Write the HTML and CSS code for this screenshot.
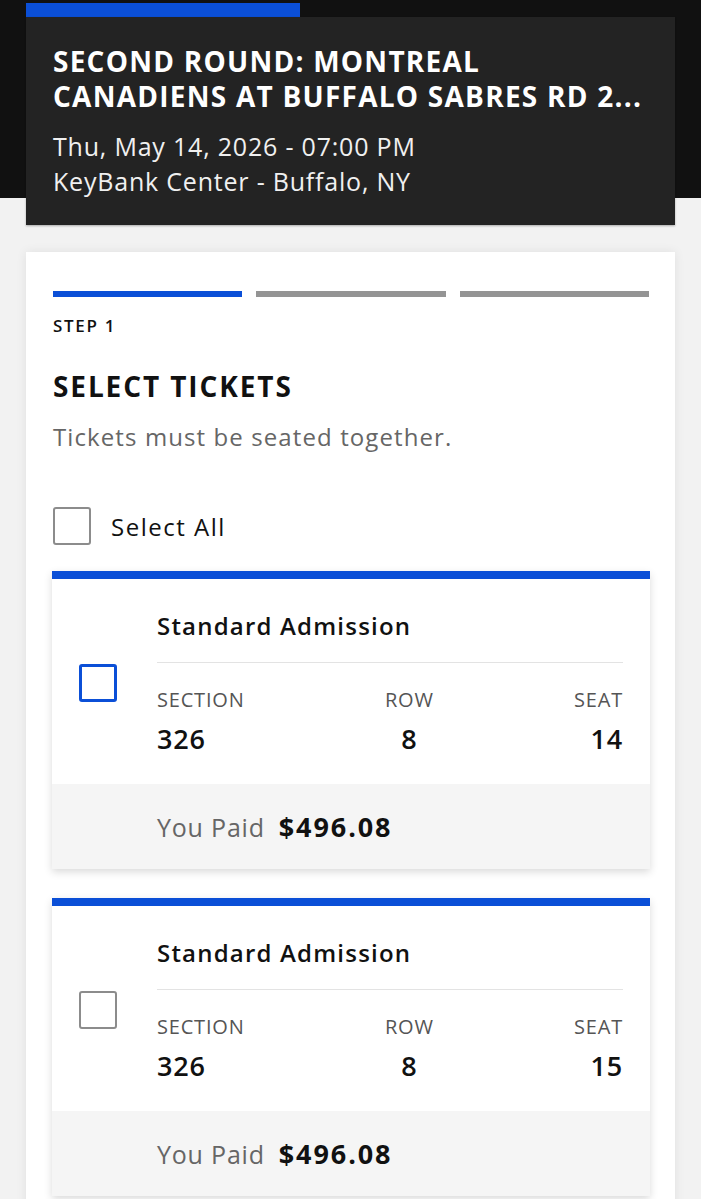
FILE: index.html
```html
<!DOCTYPE html>
<html lang="en">
<head>
  <meta charset="UTF-8">
  <meta name="viewport" content="width=device-width, initial-scale=1.0">
  <title>Select Tickets</title>
  <link rel="stylesheet" href="styles.css">
</head>
<body>
  <div class="page">
    <div class="event-tab"></div>
    <div class="event">
      <h1>Second Round: Montreal<br>Canadiens at Buffalo Sabres RD 2...</h1>
      <p>Thu, May 14, 2026 - 07:00 PM</p>
      <p>KeyBank Center - Buffalo, NY</p>
    </div>

    <div class="panel">
      <div class="steps">
        <span class="active"></span>
        <span></span>
        <span></span>
      </div>
      <div class="step-label">Step 1</div>
      <h2>Select Tickets</h2>
      <p class="hint">Tickets must be seated together.</p>

      <label class="select-all">
        <span class="box"></span>
        <span>Select All</span>
      </label>

      <div class="ticket">
        <div class="ticket-main">
          <div class="check"><span class="box focus"></span></div>
          <div class="ticket-info">
            <div class="ticket-type">Standard Admission</div>
            <div class="seat-grid">
              <div class="col"><span class="lbl">Section</span><span class="val">326</span></div>
              <div class="col mid"><span class="lbl">Row</span><span class="val">8</span></div>
              <div class="col end"><span class="lbl">Seat</span><span class="val">14</span></div>
            </div>
          </div>
        </div>
        <div class="ticket-foot">
          <span class="paid">You Paid</span>
          <span class="price">$496.08</span>
        </div>
      </div>

      <div class="ticket">
        <div class="ticket-main">
          <div class="check"><span class="box"></span></div>
          <div class="ticket-info">
            <div class="ticket-type">Standard Admission</div>
            <div class="seat-grid">
              <div class="col"><span class="lbl">Section</span><span class="val">326</span></div>
              <div class="col mid"><span class="lbl">Row</span><span class="val">8</span></div>
              <div class="col end"><span class="lbl">Seat</span><span class="val">15</span></div>
            </div>
          </div>
        </div>
        <div class="ticket-foot">
          <span class="paid">You Paid</span>
          <span class="price">$496.08</span>
        </div>
      </div>
    </div>
  </div>
</body>
</html>
```

FILE: styles.css
```css
body {
  margin: 0;
  padding: 0;
  font-family: 'Open Sans', 'Noto Sans', sans-serif;
  background-color: #f2f2f2;
  overflow: hidden;
}

.page {
  padding: 3px 26px 0;
  background: linear-gradient(#111111 198px, #f2f2f2 198px);
}

.event-tab {
  width: 274px;
  height: 14px;
  background-color: #0b4fd7;
}

.event {
  background-color: #232323;
  color: #ffffff;
  padding: 27px 27px 26px;
  box-shadow: 0 1px 2px rgba(0, 0, 0, 0.3);
}

.event h1 {
  margin: 0 0 15px;
  font-size: 28px;
  line-height: 35px;
  font-weight: 700;
  letter-spacing: 1.25px;
  text-transform: uppercase;
  white-space: nowrap;
}

.event p {
  margin: 0;
  font-size: 25px;
  line-height: 35px;
  font-weight: 400;
  letter-spacing: 0.8px;
  color: #f0f0f0;
}

.panel {
  margin-top: 27px;
  background: #ffffff;
  padding: 39px 26px 40px 27px;
  box-shadow: 0 0 10px rgba(0, 0, 0, 0.08);
}

.steps {
  display: flex;
  gap: 14px;
}

.steps span {
  flex: 1;
  height: 6px;
  background-color: #949494;
}

.steps .active {
  background-color: #0b4fd7;
}

.step-label {
  margin-top: 19px;
  font-size: 17px;
  line-height: 20px;
  font-weight: 600;
  letter-spacing: 1.7px;
  text-transform: uppercase;
  color: #111;
}

h2 {
  margin: 34px 0 0;
  font-size: 28px;
  line-height: 32px;
  font-weight: 700;
  letter-spacing: 1.9px;
  text-transform: uppercase;
  color: #111;
}

.hint {
  margin: 21px 0 0;
  font-size: 24px;
  line-height: 28px;
  letter-spacing: 1.1px;
  color: #666;
}

.box {
  display: block;
  width: 34px;
  height: 34px;
  border: 2px solid #8c8c8c;
  border-radius: 3px;
  background: #fff;
}

.box.focus {
  width: 32px;
  height: 32px;
  border: 3px solid #0b4fd7;
}

.select-all {
  display: flex;
  align-items: center;
  gap: 20px;
  margin-top: 56px;
  font-size: 24px;
  letter-spacing: 1.5px;
  color: #111;
}

.ticket {
  margin: 26px -1px 0 -1px;
  border-top: 8px solid #0b4fd7;
  background: #ffffff;
  box-shadow: 0 3px 8px rgba(0, 0, 0, 0.15);
}

.ticket + .ticket {
  margin-top: 29px;
}

.ticket-main {
  display: flex;
  align-items: center;
  padding: 32px 27px 30px 27px;
}

.check {
  width: 78px;
  flex-shrink: 0;
}

.ticket-info {
  flex: 1;
}

.ticket-type {
  font-size: 24px;
  line-height: 30px;
  font-weight: 600;
  letter-spacing: 1.2px;
  color: #111;
  padding-bottom: 21px;
  border-bottom: 1px solid #e3e3e3;
}

.seat-grid {
  display: flex;
  justify-content: space-between;
  margin-top: 25px;
}

.col {
  display: flex;
  flex-direction: column;
  align-items: flex-start;
}

.col.mid {
  align-items: center;
}

.col.end {
  align-items: flex-end;
}

.lbl {
  font-size: 20px;
  line-height: 24px;
  letter-spacing: 0.8px;
  text-transform: uppercase;
  color: #555;
}

.val {
  margin-top: 12px;
  font-size: 27px;
  line-height: 30px;
  font-weight: 600;
  letter-spacing: 0.8px;
  color: #111;
}

.ticket-foot {
  display: flex;
  align-items: center;
  gap: 14px;
  height: 85px;
  padding-left: 105px;
  background-color: #f5f5f5;
}

.paid {
  font-size: 25px;
  letter-spacing: 0.8px;
  color: #666;
}

.price {
  font-size: 27px;
  font-weight: 700;
  letter-spacing: 1.9px;
  color: #111;
}
```
